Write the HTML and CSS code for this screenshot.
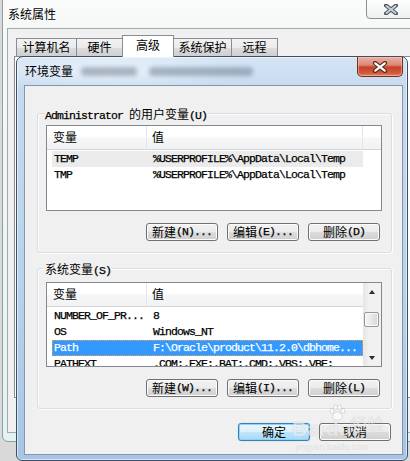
FILE: index.html
```html
<!DOCTYPE html>
<html lang="zh-CN">
<head>
<meta charset="utf-8">
<title>环境变量</title>
<link rel="stylesheet" href="styles.css">
</head>
<body>
<div class="syswin">
  <div class="systitle">系统属性</div>
  <div class="sysclient">
    <div class="tabs">
      <div class="tab t1">计算机名</div>
      <div class="tab t2">硬件</div>
      <div class="tab t3 sel">高级</div>
      <div class="tab t4">系统保护</div>
      <div class="tab t5">远程</div>
    </div>
    <div class="tabpage"></div>
  </div>
</div>
<div class="sysclose">
  <svg width="14" height="11" viewBox="0 0 14 11"><path d="M2 1.5 L12 9.5 M12 1.5 L2 9.5" stroke="#4a5560" stroke-width="4" stroke-linecap="round"/><path d="M2.5 2 L11.5 9 M11.5 2 L2.5 9" stroke="#c9d0d6" stroke-width="2" stroke-linecap="round"/></svg>
</div>

<div class="envwin">
  <div class="envtitle"><span>环境变量</span><span class="blur b1"></span><span class="blur b2"></span></div>
  <div class="envclose">
    <svg width="16" height="12" viewBox="0 0 16 12"><path d="M3 2 L13 10 M13 2 L3 10" stroke="#5a2a22" stroke-width="4.2" stroke-linecap="round"/><path d="M3.3 2.3 L12.7 9.7 M12.7 2.3 L3.3 9.7" stroke="#ffffff" stroke-width="2.2" stroke-linecap="round"/></svg>
  </div>
  <div class="envbody">
    <div class="group g1">
      <div class="legend"><span class="m">Administrator </span>的用户变量<span class="m">(U)</span></div>
      <div class="list l1">
        <div class="lhead">
          <div class="hc h1">变量</div>
          <div class="hc h2">值</div>
          <div class="hc h3"></div>
        </div>
        <div class="rows">
          <div class="row gray"><span class="r1">TEMP</span><span>%USERPROFILE%\AppData\Local\Temp</span></div>
          <div class="row"><span class="r1">TMP</span><span>%USERPROFILE%\AppData\Local\Temp</span></div>
        </div>
      </div>
      <div class="btns">
        <div class="btn">新建<span class="m">(N)...</span></div>
        <div class="btn">编辑<span class="m">(E)...</span></div>
        <div class="btn">删除<span class="m">(D)</span></div>
      </div>
    </div>

    <div class="group g2">
      <div class="legend">系统变量<span class="m">(S)</span></div>
      <div class="list l2">
        <div class="lmain">
          <div class="lhead">
            <div class="hc h1">变量</div>
            <div class="hc h2 last">值</div>
          </div>
          <div class="rows">
            <div class="row"><span class="r1">NUMBER_OF_PR...</span><span>8</span></div>
            <div class="row"><span class="r1">OS</span><span>Windows_NT</span></div>
            <div class="row blue"><span class="r1">Path</span><span>F:\Oracle\product\11.2.0\dbhome...</span></div>
            <div class="row"><span class="r1">PATHEXT</span><span>.COM;.EXE;.BAT;.CMD;.VBS;.VBE;</span></div>
          </div>
        </div>
        <div class="sb">
          <div class="sbbtn"><i class="up"></i></div>
          <div class="thumb"></div>
          <div class="sbbtn down"><i class="dn"></i></div>
        </div>
      </div>
      <div class="btns">
        <div class="btn">新建<span class="m">(W)...</span></div>
        <div class="btn">编辑<span class="m">(I)...</span></div>
        <div class="btn">删除<span class="m">(L)</span></div>
      </div>
    </div>

    <div class="okrow">
      <div class="btn def">确定</div>
      <div class="btn">取消</div>
    </div>
  </div>
</div>

<div class="wm">
  <span class="wm-b">Bai</span><span class="wm-paw">
    <svg width="18" height="18" viewBox="0 0 18 18"><g fill="rgba(255,255,255,0.8)" stroke="rgba(120,120,120,0.35)" stroke-width="0.8"><ellipse cx="4" cy="7" rx="2" ry="2.6"/><ellipse cx="7.5" cy="3.5" rx="2" ry="2.6"/><ellipse cx="11.5" cy="3.5" rx="2" ry="2.6"/><ellipse cx="15" cy="7" rx="2" ry="2.6"/><path d="M9.5 8 C6 8 4 12 5 14.5 C6 16.5 13 16.5 14 14.5 C15 12 13 8 9.5 8 Z"/></g></svg>
  </span><span class="wm-c">du</span><span class="wm-j">经验</span>
  <div class="wm-u">jingyan.baidu.com</div>
</div>
</body>
</html>
```

FILE: styles.css
```css
* { box-sizing: border-box; margin: 0; padding: 0; }
html, body { width: 410px; height: 461px; overflow: hidden; }
body {
  position: relative;
  background: #d9d9d9;
  font-family: "Noto Sans CJK SC", "Noto Sans", sans-serif;
  font-size: 12px;
  color: #000;
}
.m {
  font-family: "Liberation Mono", "DejaVu Sans Mono", monospace;
  font-size: 11.5px;
  letter-spacing: -0.9px;
  -webkit-text-stroke: 0.25px #000;
}

/* outer window: 系统属性 */
.syswin {
  position: absolute;
  left: 2px;
  top: -10px;
  width: 440px;
  height: 452px;
  border: 1px solid #8e9ea2;
  border-radius: 0 0 6px 6px;
  background: linear-gradient(#fbfbfb 0, #f6f8f8 38px, #e3f2f2 100%);
  padding: 0 0 0 4px;
}
.systitle {
  height: 37px;
  padding: 16px 0 0 1px;
  line-height: 14px;
  font-size: 12px;
}
.sysclient {
  height: 405px;
  border: 1px solid #a3a9ae;
  background: #f0f0f0;
  padding: 6px 0 0 8px;
}
.tabs {
  display: flex;
  align-items: flex-end;
  height: 22px;
}
.tab {
  height: 18px;
  margin: 0 0 1px -1px;
  border: 1px solid #898c95;
  border-bottom: none;
  background: linear-gradient(#f2f2f2 0, #ebebeb 50%, #dddddd 51%, #cfcfcf 100%);
  text-align: center;
  line-height: 16px;
  font-size: 12px;
}
.tab.t1 { width: 61px; margin-left: 0; }
.tab.t2 { width: 47px; }
.tab.t3 { width: 52px; }
.tab.t4 { width: 59px; }
.tab.t5 { width: 47px; }
.tab.sel {
  position: relative;
  z-index: 2;
  height: 22px;
  margin-bottom: 0;
  background: #fff;
  line-height: 18px;
}
.tabpage {
  margin: -1px 0 0 -2px;
  height: 342px;
  border: 1px solid #898c95;
  background: #fff;
}
.sysclose {
  position: absolute;
  left: 366px;
  top: -1px;
  width: 50px;
  height: 20px;
  border: 1px solid #8a8f94;
  border-radius: 0 0 4px 4px;
  background: linear-gradient(#fdfdfd, #eef0f2);
  display: flex;
  align-items: center;
  justify-content: center;
}

/* 环境变量 dialog */
.envwin {
  position: absolute;
  left: 16px;
  top: 56px;
  width: 392px;
  height: 405px;
  border: 1px solid #3f4f60;
  border-radius: 7px 7px 6px 6px;
  background:
    radial-gradient(ellipse 140px 22px at 90px 14px, rgba(255,255,255,0.55), rgba(255,255,255,0) 100%),
    linear-gradient(180deg, #d5e5f5 0, #c6daef 30px, #b7d1ec 60%, #a6c5e6 100%);
  box-shadow: inset 0 0 0 1px rgba(255,255,255,0.55);
  padding: 0 4px 5px 7px;
}
.envtitle {
  height: 28px;
  line-height: 28px;
  padding-left: 1px;
  display: flex;
  align-items: center;
  font-size: 12px;
}
.blur {
  display: block;
  height: 9px;
  background: #5d6f80;
  filter: blur(2px);
  opacity: 0.45;
  border-radius: 4px;
}
.blur.b1 { width: 56px; margin-left: 8px; }
.blur.b2 { width: 104px; margin-left: 12px; }
.envclose {
  position: absolute;
  left: 340px;
  top: 0;
  width: 46px;
  height: 20px;
  border: 1px solid #6e3124;
  border-top: none;
  border-radius: 0 0 5px 5px;
  background: linear-gradient(#eab0a3 0, #dc8b78 40%, #c6432a 55%, #d25a3c 85%, #e58a64 100%);
  box-shadow: inset 0 0 0 1px rgba(255,210,200,0.45);
  display: flex;
  align-items: center;
  justify-content: center;
}
.envbody {
  height: 370px;
  border: 1px solid #8397ab;
  background: #f0f0f0;
}

/* group boxes */
.group {
  margin: 27px 10px 0 12px;
  border: 1px solid #d5dfe5;
  border-radius: 3px;
  box-shadow: inset 1px 1px 0 #fdfdfd, 1px 1px 0 #fdfdfd;
  padding: 0 0 11px 0;
}
.group.g2 { margin-top: 15px; }
.legend {
  width: max-content;
  height: 15px;
  margin: -8px 0 0 6px;
  padding: 0 1px;
  background: #f0f0f0;
  line-height: 15px;
  white-space: pre;
}

/* list views */
.list {
  margin: 4px 9px 0 8px;
  height: 86px;
  border: 1px solid #828790;
  background: #fff;
  overflow: hidden;
}
.list.l2 {
  margin-top: 6px;
  height: 85px;
  display: flex;
}
.lmain { width: 316px; }
.lhead {
  display: flex;
  height: 24px;
  border-bottom: 1px solid #d5d5d5;
  background: linear-gradient(#ffffff 0, #ffffff 45%, #f5f6f7 55%, #f1f2f4 100%);
}
.hc {
  line-height: 22px;
  border-right: 1px solid #e3e5e8;
  font-size: 12px;
}
.h1 { width: 100px; padding-left: 6px; }
.h2 { width: 216px; padding-left: 5px; }
.h2.last { border-right: none; }
.h3 { flex: 1; border-right: none; }
.rows { padding-top: 1px; }
.row {
  display: flex;
  width: 311px;
  height: 16px;
  margin-left: 5px;
  padding-left: 2px;
  line-height: 16px;
  white-space: nowrap;
  font-family: "Liberation Mono", "DejaVu Sans Mono", monospace;
  font-size: 11.5px;
  letter-spacing: -0.9px;
  -webkit-text-stroke: 0.25px currentColor;
}
.r1 { width: 99px; flex: none; }
.row.gray { background: #ebebeb; }
.row.blue {
  background: #3399ff;
  color: #fff;
  outline: 1px dotted #f0a040;
  outline-offset: -1px;
}

/* scrollbar */
.sb {
  width: 18px;
  display: flex;
  flex-direction: column;
  background: linear-gradient(90deg, #e6e6e6 0, #f1f1f1 35%, #f1f1f1 100%);
}
.sbbtn {
  height: 17px;
  display: flex;
  align-items: center;
  justify-content: center;
}
.sbbtn.down { margin-top: auto; }
.up, .dn {
  display: block;
  width: 0;
  height: 0;
  border-left: 3.5px solid transparent;
  border-right: 3.5px solid transparent;
}
.up { border-bottom: 4px solid #2c2c2c; }
.dn { border-top: 4px solid #2c2c2c; }
.thumb {
  margin: 12px 0 0 1px;
  width: 15px;
  height: 15px;
  border: 1px solid #979797;
  border-radius: 2px;
  background: linear-gradient(90deg, #f4f4f4 0, #e8e8e8 50%, #d6d6d6 100%);
  box-shadow: inset 0 0 0 1px #fafafa;
}

/* buttons */
.btns {
  display: flex;
  justify-content: flex-end;
  gap: 9px;
  margin-top: 12px;
  padding-right: 11px;
}
.okrow {
  display: flex;
  justify-content: flex-end;
  gap: 9px;
  margin-top: 14px;
  padding-right: 11px;
}
.btn {
  width: 72px;
  height: 18px;
  border: 1px solid #707070;
  border-radius: 3px;
  background: linear-gradient(#f2f2f2 0, #ebebeb 50%, #dddddd 51%, #cfcfcf 100%);
  box-shadow: inset 0 0 0 1px #fcfcfc;
  display: flex;
  align-items: center;
  justify-content: center;
  line-height: 16px;
  font-size: 12px;
  white-space: pre;
}
.btn.def {
  border-color: #3c7fb1;
  background: linear-gradient(#eaf6fd 0, #d9f0fc 50%, #bee6fd 51%, #a7d9f5 100%);
  box-shadow: inset 0 0 0 1px #8fd2f7, 0 0 1px #48a8e0;
}

/* watermark */
.wm {
  position: absolute;
  left: 292px;
  top: 404px;
  width: 100px;
  height: 52px;
  pointer-events: none;
  opacity: 0.8;
}
.wm-b, .wm-c {
  position: absolute;
  top: 14px;
  font-family: "Liberation Sans", sans-serif;
  font-weight: bold;
  font-size: 21px;
  line-height: 22px;
  color: rgba(255,255,255,0.75);
  text-shadow: 0 0 1px rgba(90,90,90,0.45);
}
.wm-b { left: 0; }
.wm-c { left: 34px; }
.wm-paw { position: absolute; left: 36px; top: 0; }
.wm-j {
  position: absolute;
  left: 58px;
  top: 10px;
  font-size: 17px;
  line-height: 20px;
  color: rgba(255,255,255,0.7);
  text-shadow: 0 0 1px rgba(90,90,90,0.45);
}
.wm-u {
  position: absolute;
  left: 4px;
  top: 38px;
  font-family: "Liberation Sans", sans-serif;
  font-size: 9px;
  line-height: 10px;
  color: rgba(210,210,210,0.7);
}
```
